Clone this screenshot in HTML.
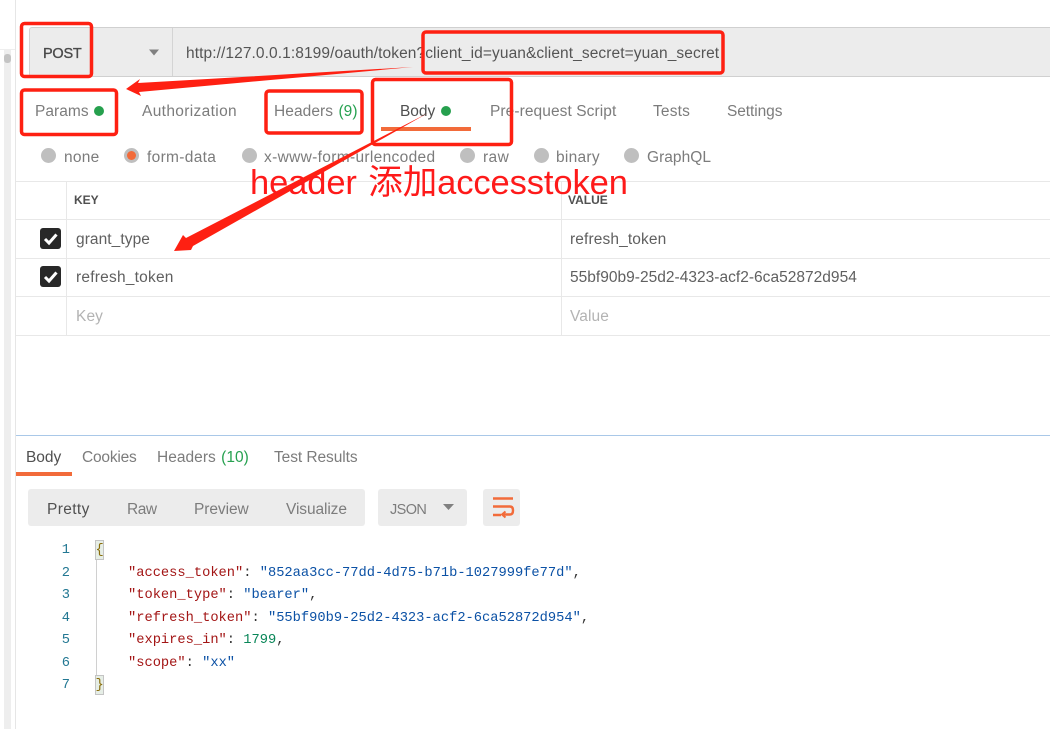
<!DOCTYPE html>
<html><head><meta charset="utf-8">
<style>
html,body{margin:0;padding:0;background:#fff}
#p{position:relative;width:1050px;height:729px;overflow:hidden;background:#fff;font-family:"Liberation Sans","Noto Sans CJK SC",sans-serif;}
.a{position:absolute}
.t{position:absolute;white-space:nowrap;font-size:15.5px;line-height:20px;color:#7c7c7c;margin-top:1px}
.d{color:#505050}
.g{color:#26a150}
.l{position:absolute;background:#e8e8e8}
.r{position:absolute;width:15px;height:15px;border-radius:50%;background:#bfbfbf}
.c{position:absolute;white-space:pre;font-family:"Liberation Mono",monospace;font-size:13.73px;line-height:22.5px;color:#333;margin-top:1px}
.k{color:#a31515}.s{color:#0b51a5}.n{color:#098658}
.ln{position:absolute;left:50px;width:20px;text-align:right;font-family:"Liberation Mono",monospace;font-size:13.73px;line-height:22.5px;color:#237893;margin-top:1px}
.cb{position:absolute;left:40px;width:21px;height:21px;border-radius:3px;background:#282828}
</style></head><body><div id="p">
<!-- sidebar -->
<div class="a" style="left:15px;top:0;width:1px;height:729px;background:#e6e6e6"></div>
<div class="a" style="left:0;top:49px;width:15px;height:1px;background:#eee"></div>
<div class="a" style="left:4px;top:50px;width:7px;height:679px;background:#eee"></div>
<div class="a" style="left:4px;top:54px;width:7px;height:9px;border-radius:3px;background:#c4c4c4"></div>

<!-- url bar -->
<div class="a" style="left:29px;top:27px;width:1021px;height:48px;background:#ececec;border-top:1px solid #d0d0d0;border-bottom:1px solid #d0d0d0;border-left:1px solid #d4d4d4;border-radius:3px 0 0 3px"></div>
<div class="a" style="left:172px;top:28px;width:1px;height:48px;background:#d4d4d4"></div>
<div class="t" style="left:43px;top:42.500px;color:#4a4a4a;font-size:14.500px;letter-spacing:-.25px;-webkit-text-stroke:.35px #4a4a4a">POST</div>
<svg class="a" style="left:148px;top:48px" width="12" height="9"><path d="M1 1.500h10L6 7.500z" fill="#808080"/></svg>
<div class="t" style="left:186px;top:43px;color:#555;letter-spacing:.09px">http://127.0.0.1:8199/oauth/token?client_id=yuan&amp;client_secret=yuan_secret</div>

<!-- tabs -->
<div class="t" style="left:35px;top:101px;letter-spacing:.04px">Params</div>
<div class="a" style="left:94px;top:106px;width:10px;height:10px;border-radius:50%;background:#26a04e"></div>
<div class="t" style="left:142px;top:101px;letter-spacing:.35px">Authorization</div>
<div class="t" style="left:274px;top:101px;letter-spacing:.07px">Headers <span class="g" style="margin-left:1px">(9)</span></div>
<div class="t d" style="left:400px;top:101px;letter-spacing:-.03px">Body</div>
<div class="a" style="left:441px;top:106px;width:10px;height:10px;border-radius:50%;background:#26a04e"></div>
<div class="a" style="left:381px;top:127px;width:90px;height:4px;background:#f26b3a"></div>
<div class="t" style="left:490px;top:101px;letter-spacing:.08px">Pre-request Script</div>
<div class="t" style="left:653px;top:101px;letter-spacing:.17px">Tests</div>
<div class="t" style="left:727px;top:101px;letter-spacing:-.08px">Settings</div>

<!-- radios -->
<div class="r" style="left:41px;top:148px"></div>
<div class="t" style="left:64px;top:147px;letter-spacing:.25px">none</div>
<div class="r" style="left:124px;top:148px"></div>
<div class="a" style="left:127px;top:151px;width:9px;height:9px;border-radius:50%;background:#f26b3a"></div>
<div class="t" style="left:147px;top:147px;letter-spacing:.32px">form-data</div>
<div class="r" style="left:242px;top:148px"></div>
<div class="t" style="left:264px;top:147px;letter-spacing:.33px">x-www-form-urlencoded</div>
<div class="r" style="left:460px;top:148px"></div>
<div class="t" style="left:483px;top:147px;letter-spacing:.4px">raw</div>
<div class="r" style="left:534px;top:148px"></div>
<div class="t" style="left:556px;top:147px;letter-spacing:.28px">binary</div>
<div class="r" style="left:624px;top:148px"></div>
<div class="t" style="left:647px;top:147px;letter-spacing:.03px">GraphQL</div>

<!-- table -->
<div class="l" style="left:16px;top:181px;width:1034px;height:1px"></div>
<div class="l" style="left:16px;top:219px;width:1034px;height:1px"></div>
<div class="l" style="left:16px;top:258px;width:1034px;height:1px"></div>
<div class="l" style="left:16px;top:296px;width:1034px;height:1px"></div>
<div class="l" style="left:16px;top:335px;width:1034px;height:1px"></div>
<div class="l" style="left:66px;top:182px;width:1px;height:153px"></div>
<div class="l" style="left:561px;top:182px;width:1px;height:153px"></div>
<div class="t" style="left:74px;top:189px;font-size:12px;font-weight:bold;color:#505050">KEY</div>
<div class="t" style="left:568px;top:189px;font-size:12px;font-weight:bold;color:#505050">VALUE</div>
<div class="cb" style="top:228px"></div>
<svg class="a" style="left:40px;top:228px" width="21" height="21"><path d="M5 11l4 4 7.500-8.500" fill="none" stroke="#fff" stroke-width="3"/></svg>
<div class="cb" style="top:266px"></div>
<svg class="a" style="left:40px;top:266px" width="21" height="21"><path d="M5 11l4 4 7.500-8.500" fill="none" stroke="#fff" stroke-width="3"/></svg>
<div class="t" style="left:76px;top:229px;color:#606060;letter-spacing:.07px">grant_type</div>
<div class="t" style="left:570px;top:229px;color:#606060;letter-spacing:.12px">refresh_token</div>
<div class="t" style="left:76px;top:267px;color:#606060;letter-spacing:.22px">refresh_token</div>
<div class="t" style="left:570px;top:267px;color:#606060;letter-spacing:.02px">55bf90b9-25d2-4323-acf2-6ca52872d954</div>
<div class="t" style="left:76px;top:306px;color:#b3b3b3;letter-spacing:.1px">Key</div>
<div class="t" style="left:570px;top:306px;color:#b3b3b3;letter-spacing:.1px">Value</div>

<!-- response -->
<div class="a" style="left:16px;top:435px;width:1034px;height:1px;background:#a9c8e8"></div>
<div class="t d" style="left:26px;top:447px;letter-spacing:-.03px">Body</div>
<div class="a" style="left:16px;top:472px;width:56px;height:4px;background:#f26b3a"></div>
<div class="t" style="left:82px;top:447px;letter-spacing:-.2px">Cookies</div>
<div class="t" style="left:157px;top:447px;letter-spacing:.03px">Headers <span class="g" style="margin-left:1px">(10)</span></div>
<div class="t" style="left:274px;top:447px;letter-spacing:-.07px">Test Results</div>

<div class="a" style="left:28px;top:489px;width:337px;height:37px;background:#ececec;border-radius:3px"></div>
<div class="t d" style="left:47px;top:499px;letter-spacing:.37px">Pretty</div>
<div class="t" style="left:127px;top:499px;letter-spacing:-.5px">Raw</div>
<div class="t" style="left:194px;top:499px;letter-spacing:-.07px">Preview</div>
<div class="t" style="left:286px;top:499px;letter-spacing:-.1px">Visualize</div>
<div class="a" style="left:378px;top:489px;width:89px;height:37px;background:#ececec;border-radius:3px"></div>
<div class="t" style="left:390px;top:499px;font-size:14.500px;letter-spacing:-.6px">JSON</div>
<svg class="a" style="left:427px;top:484px;overflow:visible" width="40" height="40"><path d="M16 20h11l-5.500 6z" fill="#808080"/></svg>
<div class="a" style="left:483px;top:489px;width:37px;height:37px;background:#ececec;border-radius:3px"></div>
<svg class="a" style="left:483px;top:489px" width="37" height="37" fill="none" stroke="#f26b3a" stroke-width="2.400"><path d="M10 9.500h20M10 17.500h17q3 0 3 4t-3 4h-8M10 26h8"/><path d="M22.500 22.500l-3.500 3 3.500 3" stroke-width="2"/></svg>

<!-- code -->
<div class="ln" style="top:539px">1</div>
<div class="ln" style="top:561.500px">2</div>
<div class="ln" style="top:584px">3</div>
<div class="ln" style="top:606.500px">4</div>
<div class="ln" style="top:629px">5</div>
<div class="ln" style="top:651.500px">6</div>
<div class="ln" style="top:674px">7</div>
<div class="a" style="left:96px;top:560px;width:1px;height:115px;background:#d0d0d0"></div>
<div class="a" style="left:95px;top:540px;width:9px;height:20px;background:#e6eee6;border:1px solid #c4c4c4;box-sizing:border-box"></div>
<div class="a" style="left:95px;top:675px;width:9px;height:20px;background:#e6eee6;border:1px solid #c4c4c4;box-sizing:border-box"></div>
<div class="c" style="left:95.500px;top:539px;color:#8a6d0b">{</div>
<div class="c" style="left:128px;top:561.500px"><span class="k">"access_token"</span>: <span class="s">"852aa3cc-77dd-4d75-b71b-1027999fe77d"</span>,</div>
<div class="c" style="left:128px;top:584px"><span class="k">"token_type"</span>: <span class="s">"bearer"</span>,</div>
<div class="c" style="left:128px;top:606.500px"><span class="k">"refresh_token"</span>: <span class="s">"55bf90b9-25d2-4323-acf2-6ca52872d954"</span>,</div>
<div class="c" style="left:128px;top:629px"><span class="k">"expires_in"</span>: <span class="n">1799</span>,</div>
<div class="c" style="left:128px;top:651.500px"><span class="k">"scope"</span>: <span class="s">"xx"</span></div>
<div class="c" style="left:95.500px;top:674px;color:#8a6d0b">}</div>

<!-- annotation -->
<svg class="a" style="left:0;top:0" width="1050" height="729" fill="none" stroke="#fe2012" stroke-width="3.500" stroke-linejoin="round">
<rect x="21.500" y="23.500" width="70" height="53" rx="3"/>
<rect x="423" y="32" width="300" height="41" rx="3"/>
<rect x="21.500" y="90" width="95" height="44.500" rx="3"/>
<rect x="266" y="91" width="96" height="42" rx="3"/>
<rect x="372.500" y="79.500" width="139" height="65" rx="3"/>
<path d="M413 67L138 83 140 79 126 89 141 96 139 92z" fill="#fe2012" stroke="none"/>
<path d="M428 113L186 238 183 235 174 251 191 250 193 246z" fill="#fe2012" stroke="none"/>
</svg>
<div class="t" style="left:250px;top:161px;font-size:34.500px;line-height:42px;color:#fe1a1a;word-spacing:2px;letter-spacing:-.1px">header 添加accesstoken</div>
</div></body></html>
